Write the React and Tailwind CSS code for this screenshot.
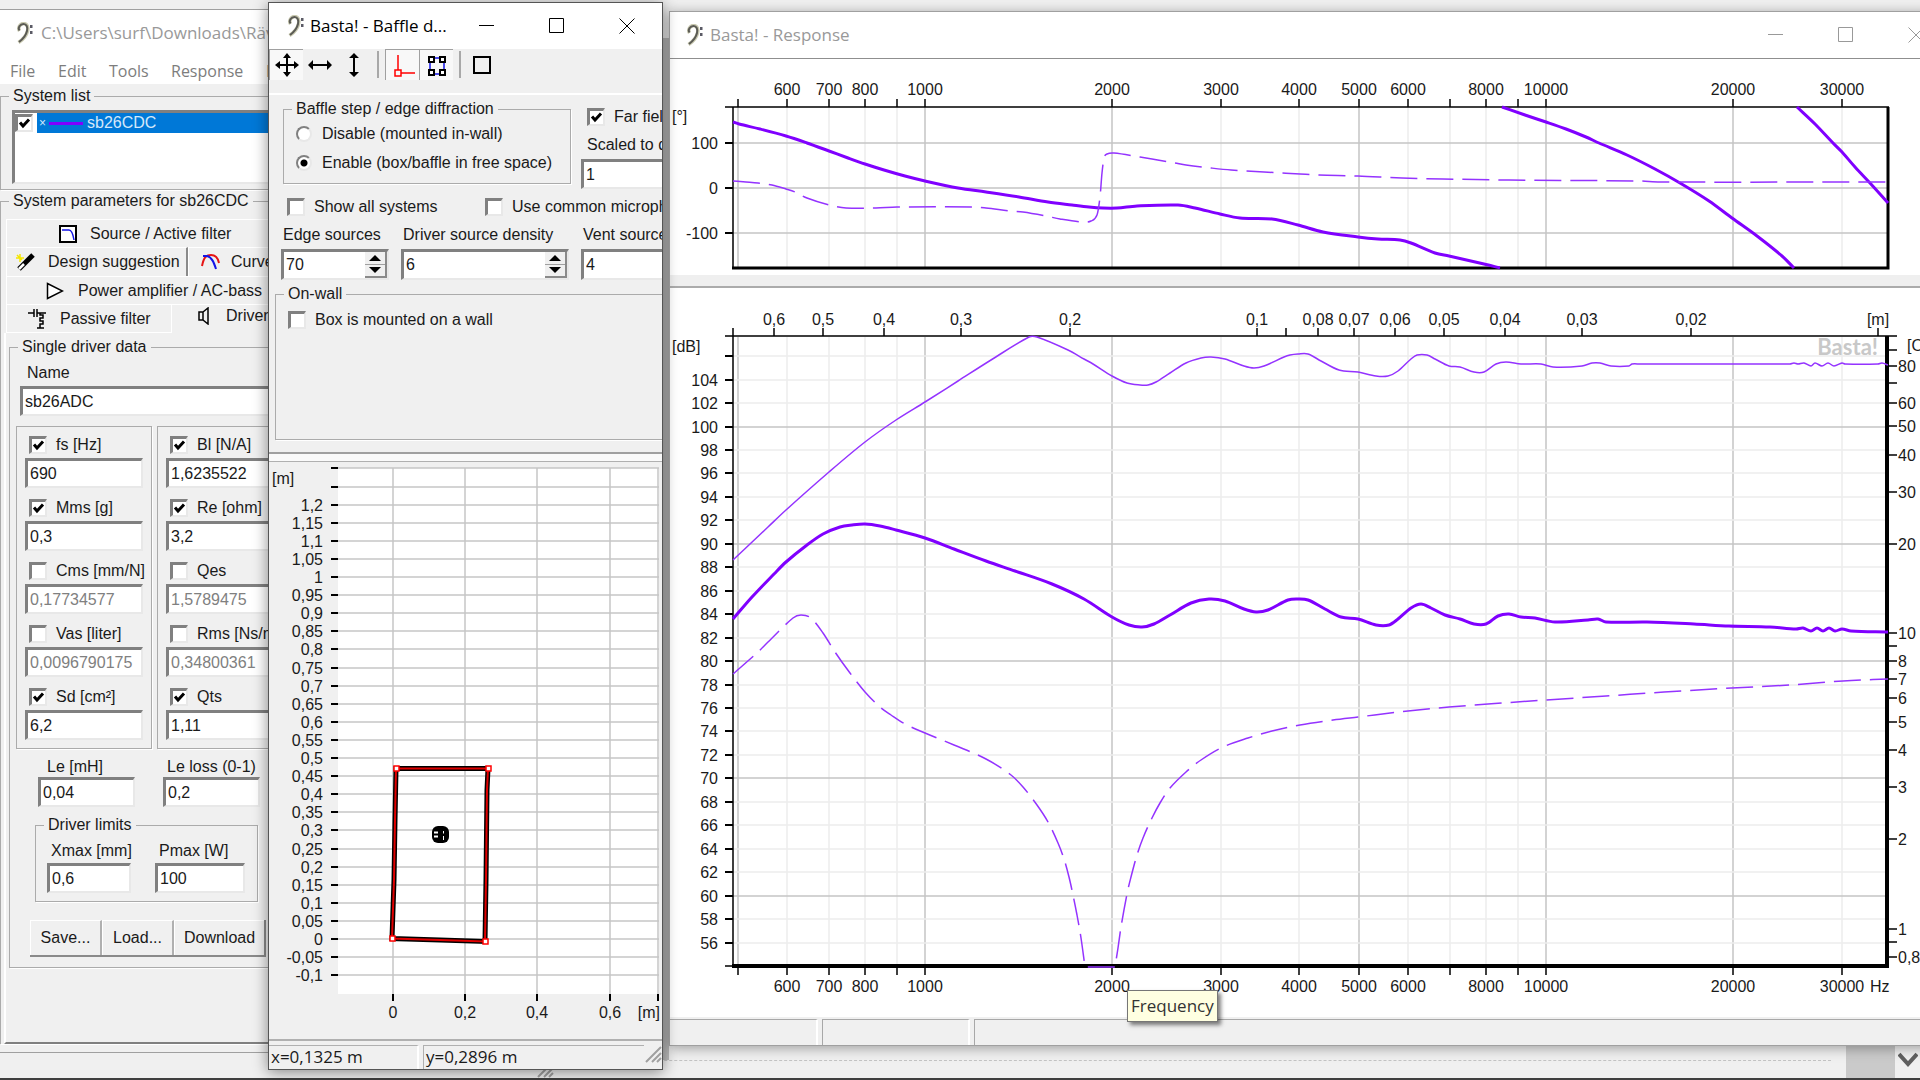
import { useId } from "react";
import { clsx } from "clsx";

const SUNKEN = "border-t-3 border-l-3 border-r-2 border-b-2 border-t-[#808080] border-l-[#808080] border-r-[#e8e8e8] border-b-[#e8e8e8] bg-white";

/* ---------- shared controls ---------- */

function ClefIcon() {
  return (
    <svg width="18" height="22" viewBox="0 0 18 22" fill="none" className="shrink-0">
      <path d="M3.5 9C1.5 6 4 1.5 7.500 1.500C11 1.500 12.500 5 11.500 9C10.500 13.500 7 17.500 2.500 20.500" stroke="#c9c9b0" strokeWidth="3.500" />
      <path d="M3.500 8.500C1.500 6 4 2 7.500 2C10.500 2 12 5 11 9C10 13.500 7 17 3 20" stroke="#5b5b55" strokeWidth="2" />
      <path d="M14 3h2.500v3h-2.500zM14 9h2.500v3h-2.500z" fill="#5b5b66" />
    </svg>
  );
}

function WindowControls() {
  return (
    <div className="ml-auto flex h-full">
      <button aria-label="Minimize" className="flex w-[70px] items-center justify-center">
        <svg width="16" height="16" stroke="currentColor"><path d="M0 7.500h15" /></svg>
      </button>
      <button aria-label="Maximize" className="flex w-[70px] items-center justify-center">
        <svg width="16" height="16" stroke="currentColor" fill="none"><path d="M.5 .5h14v14h-14z" /></svg>
      </button>
      <button aria-label="Close" className="flex w-[70px] items-center justify-center">
        <svg width="16" height="16" stroke="currentColor"><path d="M.5 .5l15 15M15.500 .5l-15 15" /></svg>
      </button>
    </div>
  );
}

function Tick({ checked, label }) {
  return (
    <span className="relative flex size-[18px] shrink-0">
      <input type="checkbox" aria-label={label} defaultChecked={checked} className={clsx("peer size-[18px] appearance-none", SUNKEN)} />
      <svg viewBox="0 0 18 18" className="pointer-events-none absolute inset-0 hidden peer-checked:block">
        <path d="M5 8.500l3 3.500l6-6.500" fill="none" stroke="#000" strokeWidth="3" />
      </svg>
    </span>
  );
}

function CheckRow({ label, checked, className }) {
  return (
    <label className={clsx("flex h-5 shrink-0 items-center gap-[9px] whitespace-nowrap", className)}>
      <Tick checked={checked} />
      {label}
    </label>
  );
}

function RadioRow({ label, checked }) {
  return (
    <label className="flex h-[29px] items-center gap-[10px] pl-3 whitespace-nowrap">
      <input
        type="radio"
        name="diffraction"
        defaultChecked={checked}
        className="size-4 appearance-none rounded-full border-2 border-t-[#808080] border-l-[#808080] border-r-[#e8e8e8] border-b-[#e8e8e8] bg-white checked:bg-[radial-gradient(circle,#000_3px,#fff_4px)]"
      />
      {label}
    </label>
  );
}

function Group({ title, className, children }) {
  return (
    <fieldset className={clsx("border border-[#ababab] shadow-[1px_1px_0_#fff]", className)}>
      <legend className="ml-2 h-5 px-1 leading-5 whitespace-nowrap">{title}</legend>
      {children}
    </fieldset>
  );
}

function Field({ label, value, className, labelClass = "pl-1" }) {
  const id = useId();
  return (
    <div className={className}>
      <label htmlFor={id} className={clsx("block h-5 leading-5 whitespace-nowrap", labelClass)}>{label}</label>
      <input id={id} defaultValue={value} className={clsx("block h-[30px] w-full pl-0.5", SUNKEN)} />
    </div>
  );
}

function SpinField({ label, value, className }) {
  const id = useId();
  return (
    <div className={clsx("shrink-0", className)}>
      <label htmlFor={id} className="block h-5 pl-0.5 leading-5 whitespace-nowrap">{label}</label>
      <div className={clsx("mt-1 flex h-[31px]", SUNKEN)}>
        <input id={id} defaultValue={value} className="min-w-0 flex-1 pl-0.5" />
        <div className="flex w-[22px] flex-col border-r-2 border-b-2 border-[#8a8a8a] bg-[#f0f0f0]">
          <button aria-label={`${label} up`} className="flex flex-1 items-center justify-center border-b border-[#a0a0a0]">
            <svg width="12" height="6"><path d="M6 0l6 6h-12z" /></svg>
          </button>
          <button aria-label={`${label} down`} className="flex flex-1 items-center justify-center">
            <svg width="12" height="6"><path d="M6 6l6-6h-12z" /></svg>
          </button>
        </div>
      </div>
    </div>
  );
}

/* ---------- main window ---------- */

const LEFT_PARAMS = [
  ["fs [Hz]", "690", true],
  ["Mms [g]", "0,3", true],
  ["Cms [mm/N]", "0,17734577", false],
  ["Vas [liter]", "0,0096790175", false],
  ["Sd [cm²]", "6,2", true],
];

const RIGHT_PARAMS = [
  ["Bl [N/A]", "1,6235522", true],
  ["Re [ohm]", "3,2", true],
  ["Qes", "1,5789475", false],
  ["Rms [Ns/m]", "0,34800361", false],
  ["Qts", "1,11", true],
];

function ParamBox({ rows }) {
  return (
    <div className="flex w-[136px] flex-col gap-2.5 border border-[#ababab] pt-2 pb-2 shadow-[1px_1px_0_#fff]">
      {rows.map(([label, value, on]) => (
        <div key={label} className="flex flex-col gap-[3px]">
          <CheckRow label={label} checked={on} className="pl-3" />
          <input
            aria-label={label}
            defaultValue={value}
            className={clsx("mx-2 h-[30px] pl-0.5", SUNKEN, !on && "text-[#808080]")}
          />
        </div>
      ))}
    </div>
  );
}

function Tab({ className, icon, children }) {
  return (
    <button role="tab" className={clsx("flex h-full items-center border-t border-l border-white whitespace-nowrap", className)}>
      {icon}
      {children}
    </button>
  );
}

const filterIcon = (
  <svg width="18" height="18" fill="none">
    <path d="M1 1h16v16h-16z" fill="#fff" stroke="#000" strokeWidth="2" />
    <path d="M3 5h7c3 0 4 4 5 10" stroke="#1414e6" strokeWidth="1.500" />
  </svg>
);

const wandIcon = (
  <svg width="20" height="20" fill="none">
    <path d="M3 17L17 3" stroke="#000" strokeWidth="5" />
    <path d="M3 17l5-5" stroke="#fff" strokeWidth="2.500" />
    <path d="M4 2v8M0 6h8M1 3l5 5" stroke="#f5e600" strokeWidth="1.500" />
  </svg>
);

const curveIcon = (
  <svg width="20" height="18" fill="none" strokeWidth="2">
    <path d="M1 13C3 3 6 2 10 2s7 3 8 8" stroke="#e61414" />
    <path d="M2 3h4c5 1 7 7 9 13" stroke="#1414e6" />
  </svg>
);

const ampIcon = (
  <svg width="18" height="18" fill="none"><path d="M1.500 1.500v15l15-7.500z" fill="#fff" stroke="#000" strokeWidth="1.500" /></svg>
);

const passiveIcon = (
  <svg width="20" height="20" fill="none" stroke="#000" strokeWidth="1.500">
    <path d="M0 4h6M6 0v8M9 0v8M9 4h9M12 4v2h3v3h-3v3h3v3h-3v4M9 19h7" />
  </svg>
);

const speakerIcon = (
  <svg width="12" height="18" fill="none" stroke="#000" strokeWidth="1.500"><path d="M1 5h4v8h-4zM5 5l5-4v16l-5-4" /></svg>
);

function MainWindow() {
  return (
    <section className="absolute top-[9px] bottom-[2px] left-0 flex w-[554px] flex-col border-t border-[#a0a0a0] bg-[#f0f0f0]">
      <header className="flex h-[45px] shrink-0 items-center gap-[7px] bg-white pl-4 font-['Open_Sans',sans-serif] text-[17px] text-[#999]">
        <ClefIcon />
        <span className="whitespace-nowrap">C:\Users\surf\Downloads\Räv</span>
      </header>
      <nav className="flex h-[29px] shrink-0 items-center bg-white pt-0.5 pl-2.5 font-['Open_Sans',sans-serif] text-[#7d7d7d]">
        <button className="w-12 text-left">File</button>
        <button className="w-[51px] text-left">Edit</button>
        <button className="w-[62px] text-left">Tools</button>
        <button className="w-[95px] text-left">Response</button>
        <button className="text-left">Baffle</button>
      </nav>

      <Group title="System list" className="mt-0.5 h-[104px] shrink-0">
        <div className={clsx("mt-1 ml-[11px] h-[74px]", SUNKEN)}>
          <div className="flex h-5 items-center gap-1">
            <Tick checked label="sb26CDC" />
            <div className="flex h-5 flex-1 items-center bg-[#0078d7] pl-0.5 text-[#d4e8fa]">
              <span className="w-2.5 text-xs">×</span>
              <span className="h-[3px] w-[34px] bg-[#8000ff]" />
              <span className="ml-1">sb26CDC</span>
            </div>
          </div>
        </div>
      </Group>

      <Group title="System parameters for sb26CDC" className="mt-px flex min-h-0 flex-1 flex-col border-b-0">
        <div role="tablist" className="mt-2 shrink-0 pl-[5px]">
          <div className="h-7">
            <Tab className="w-full gap-[13px] pl-[52px]" icon={filterIcon}>Source / Active filter</Tab>
          </div>
          <div className="flex h-[29px]">
            <Tab className="w-[182px] gap-3 border-r-2 border-r-[#8a8a8a] pl-[9px]" icon={wandIcon}>Design suggestion</Tab>
            <Tab className="flex-1 gap-2.5 pl-3" icon={curveIcon}>Curves</Tab>
          </div>
          <div className="h-7">
            <Tab className="w-full gap-3.5 pl-[39px]" icon={ampIcon}>Power amplifier / AC-bass</Tab>
          </div>
          <div className="flex h-[29px]">
            <Tab className="w-[165px] gap-3 border-b pl-[21px]" icon={passiveIcon}>Passive filter</Tab>
            <Tab className="flex-1 gap-4 pb-1.5 pl-[26px]" icon={speakerIcon}>Driver</Tab>
          </div>
        </div>

        <div className="ml-[3px] min-h-0 flex-1 border-b-2 border-l-2 border-b-[#808080] border-l-white">
          <Group title="Single driver data" className="mt-1 ml-[3px] pb-2.5">
            <Field label="Name" value="sb26ADC" className="mt-1.5 pl-[10px]" labelClass="mb-[3px] pl-[7px]" />
            <div className="mt-2.5 ml-1.5 flex gap-[5px]">
              <ParamBox rows={LEFT_PARAMS} />
              <ParamBox rows={RIGHT_PARAMS} />
            </div>
            <div className="mt-2 flex gap-7 pl-7">
              <Field label="Le [mH]" value="0,04" className="w-[97px]" labelClass="pl-[9px]" />
              <Field label="Le loss (0-1)" value="0,2" className="w-[97px]" />
            </div>
            <Group title="Driver limits" className="mt-2 ml-[25px] w-[223px] pb-2">
              <div className="mt-1.5 flex gap-6 pl-[11px]">
                <Field label="Xmax [mm]" value="0,6" className="w-[84px]" labelClass="mb-0.5 pl-1" />
                <Field label="Pmax [W]" value="100" className="w-[90px]" labelClass="mb-0.5 pl-1" />
              </div>
            </Group>
            <div className="mt-[18px] ml-5 flex h-[37px] w-[236px] border-r-2 border-b-2 border-[#8a8a8a]">
              <button className="w-[72px] border-t border-r-2 border-l border-t-white border-r-[#b0b0b0] border-l-white">Save...</button>
              <button className="w-[72px] border-t border-r-2 border-l border-t-white border-r-[#b0b0b0] border-l-white">Load...</button>
              <button className="flex-1 border-t border-l border-white">Download</button>
            </div>
          </Group>
        </div>
      </Group>

      <footer className="flex h-[34px] shrink-0 items-end justify-end pt-2">
        <div className="flex h-full w-full items-end justify-end border-t border-[#a0a0a0]"><SizeGrip /></div>
      </footer>
    </section>
  );
}

function SizeGrip() {
  return (
    <svg width="18" height="18" stroke="#a0a0a0" strokeWidth="2"><path d="M2 17L17 2M8 17l9-9M13 17l4-4" /></svg>
  );
}

/* ---------- baffle window ---------- */

const metres = (v) => String(Math.round(v * 100) / 100).replace(".", ",");

function BafflePlot() {
  const rows = Array.from({ length: 29 }, (_, i) => -0.1 + i * 0.05);
  const y = (v) => Math.round(939 - v * 362);
  const outline = "M396 768.500H488L487 790L486 880L485 941.500L440 940L392 938.500L394 880L395 820Z";
  return (
    <svg viewBox="269 462 393 577" className="block w-full" fontSize="16" fill="#1a1a1a">
      <path d="M338 468H659V994H338z" fill="#fff" />
      <text x="272" y="484">[m]</text>
      {rows.map((v) => (
        <g key={v}>
          <path d={`M338 ${y(v)}H659`} stroke="#c6c6c6" strokeWidth="1.500" />
          <path d={`M331 ${y(v)}H338`} stroke="#000" strokeWidth="2" />
          {v < 1.22 && <text x="323" y={y(v) + 6} textAnchor="end">{metres(v)}</text>}
        </g>
      ))}
      {[[393, "0"], [465, "0,2"], [537, "0,4"], [610, "0,6"], [658, ""]].map(([x, t]) => (
        <g key={x}>
          <path d={`M${x} 468V994`} stroke="#c6c6c6" strokeWidth="1.500" />
          <path d={`M${x} 994V1001`} stroke="#000" strokeWidth="2" />
          <text x={x} y="1018" textAnchor="middle">{t}</text>
        </g>
      ))}
      <text x="660" y="1018" textAnchor="end">[m]</text>
      <path d={outline} fill="none" stroke="#000" strokeWidth="5" />
      <path d={outline} fill="none" stroke="#e00000" strokeWidth="2" />
      {[[396, 768], [488, 768], [485, 941], [392, 938]].map(([cx, cy]) => (
        <rect key={cx} x={cx - 2} y={cy - 2} width="5" height="5" fill="#fff" stroke="#f00" strokeWidth="1.500" />
      ))}
      <rect x="432" y="826" width="17" height="17" rx="6" fill="#000" />
      <path d="M434 831.500h4v2h-4zM434 835.500h4v2h-4z" fill="#fff" />
      <path d="M443.500 831v2.500M443.500 836v4" stroke="#fff" />
    </svg>
  );
}

function ToolButton({ label, pressed, children }) {
  return (
    <button
      aria-label={label}
      className={clsx("flex h-[31px] w-[34px] items-center justify-center", pressed && "border-t border-l border-[#a0a0a0] bg-[#f8f8f8]")}
    >
      <svg width="26" height="26" fill="none" stroke="#000" strokeWidth="2">{children}</svg>
    </button>
  );
}

function BaffleWindow() {
  return (
    <section className="absolute top-[2px] bottom-[10px] left-[268px] flex w-[395px] flex-col border border-[#555] bg-[#f0f0f0] shadow-[0_2px_14px_rgba(0,0,0,0.45)]">
      <header className="flex h-[46px] shrink-0 items-center bg-white pl-[18px] font-['Open_Sans',sans-serif] text-black">
        <ClefIcon />
        <h1 className="ml-[5px] text-[17px] whitespace-nowrap">Basta! - Baffle d...</h1>
        <WindowControls />
      </header>
      <div role="toolbar" className="flex h-11 shrink-0">
        <ToolButton label="Move" pressed>
          <path d="M13 3v20M3 13h20" />
          <path d="M13 1l4 5h-8zM13 25l4-5h-8zM1 13l5-4v8zM25 13l-5-4v8z" fill="#000" stroke="none" />
        </ToolButton>
        <ToolButton label="Move horizontally">
          <path d="M3 13h20" />
          <path d="M1 13l5-5v10zM25 13l-5-5v10z" fill="#000" stroke="none" />
        </ToolButton>
        <ToolButton label="Move vertically">
          <path d="M13 3v20" />
          <path d="M13 1l5 5h-10zM13 25l5-5h-10z" fill="#000" stroke="none" />
        </ToolButton>
        <span className="mx-1.5 mt-0.5 h-[27px] w-0.5 bg-[#a8a8a8]" />
        <ToolButton label="Edges" pressed>
          <path d="M8 3v15M11 21h14M5 18h6v6h-6z" stroke="#f00" strokeWidth="1.500" />
        </ToolButton>
        <ToolButton label="Corners" pressed>
          <path d="M6 7v14M20 7v14M7 6h12M7 22h12" stroke="#1414e6" strokeWidth="1.500" />
          <path d="M5 5h5v5h-5zM16 5h5v5h-5zM5 18h5v5h-5zM16 18h5v5h-5z" fill="#fff" />
        </ToolButton>
        <span className="mx-1.5 mt-0.5 h-[27px] w-0.5 bg-[#a8a8a8]" />
        <ToolButton label="Box">
          <path d="M3 5h16v16h-16z" />
        </ToolButton>
      </div>

      <form className="shrink-0 overflow-hidden border-t-2 border-white pb-3">
        <div className="pl-3">
          <div className="flex pt-1">
            <Group title="Baffle step / edge diffraction" className="ml-0.5 h-[85px] w-[288px] shrink-0">
              <RadioRow label="Disable (mounted in-wall)" />
              <RadioRow label="Enable (box/baffle in free space)" checked />
            </Group>
            <div className="ml-2.5 w-[120px] shrink-0 pt-2">
              <CheckRow label="Far field" checked className="mb-2 pl-1.5" />
              <Field label="Scaled to d" value="1" labelClass="mb-1 pl-1.5" />
            </div>
          </div>
          <div className="mt-2 flex pl-1.5">
            <CheckRow label="Show all systems" className="w-[198px]" />
            <CheckRow label="Use common microphone" />
          </div>
          <div className="mt-2 flex">
            <SpinField label="Edge sources" value="70" className="mr-3 w-[108px]" />
            <SpinField label="Driver source density" value="6" className="mr-3 w-[168px]" />
            <SpinField label="Vent sources" value="4" className="w-[120px]" />
          </div>
        </div>
        <Group title="On-wall" className="mt-1 ml-1.5 h-[156px] w-[420px]">
          <CheckRow label="Box is mounted on a wall" className="mt-1.5 pl-3" />
        </Group>
      </form>
      <div className="h-2.5 shrink-0 border-t-2 border-b border-t-[#a0a0a0] border-b-[#b0b0b0] bg-[#fafafa]" />

      <div className="min-h-0 flex-1">
        <BafflePlot />
      </div>

      <footer className="flex h-[30px] shrink-0 border-t-2 border-[#b0b0b0] pt-1 font-['Open_Sans',sans-serif] leading-[22px]">
        <span className="mr-1 w-[150px] border-t border-r-2 border-t-[#b0b0b0] border-r-white pl-0.5 text-[17px]">x=0,1325 m</span>
        <span className="flex-1 border-t border-l border-[#b0b0b0] pl-0.5 text-[17px]">y=0,2896 m</span>
        <SizeGrip />
      </footer>
    </section>
  );
}

/* ---------- response window ---------- */

const FREQS = [500, 600, 700, 800, 900, 1000, 2000, 3000, 4000, 5000, 6000, 7000, 8000, 9000, 10000, 20000, 30000];
const UNLABELLED = [500, 900, 7000, 9000];
const MAJOR = [500, 1000, 2000, 5000, 10000, 20000];
const WAVELENGTHS = [0.6, 0.5, 0.4, 0.3, 0.2, 0.1, 0.09, 0.08, 0.07, 0.06, 0.05, 0.04, 0.03, 0.02, 0.01];
const OHMS = [90, 80, 70, 60, 50, 40, 30, 20, 10, 9, 8, 7, 6, 5, 4, 3, 2, 1, 0.9, 0.8];
const OHM_UNLABELLED = [90, 70, 9, 0.9];

const fx = (f) => Math.round(925 + 621 * Math.log10(f / 1000));
const dbY = (db) => Math.round(426.5 + (100 - db) * 11.73);
const ohmY = (z) => Math.round(928.5 - 295.8 * Math.log10(z));

// smooth curve through the samples, x always increasing
function spline(points) {
  const p = points.split(" ").map((s) => s.split(",").map(Number));
  const slope = (i) => {
    const a = p[i - 1] ?? p[i];
    const b = p[i + 1] ?? p[i];
    return (b[1] - a[1]) / (b[0] - a[0]);
  };
  let d = `M${p[0]}`;
  for (let i = 0; i < p.length - 1; i++) {
    const [x0, y0] = p[i];
    const [x1, y1] = p[i + 1];
    const h = (x1 - x0) / 3;
    d += `C${x0 + h},${y0 + slope(i) * h} ${x1 - h},${y1 - slope(i + 1) * h} ${x1},${y1}`;
  }
  return d;
}

const PHASE = [
  "733,122 739,124 760,129 786,136 807,143 829,151 848,158 865,164 884,170 905,176 925,181 958,188 986,192 1019,197 1048,202 1072,205 1089,207 1103,208 1117,208 1137,206 1178,205 1195,208 1220,214 1240,218 1272,219 1298,225 1323,232 1358,237 1378,239 1400,240 1411,243 1435,253 1449,256 1484,264 1500,268",
  "1502,107 1525,115 1546,122 1566,129 1586,137 1599,143 1627,155 1655,169 1680,183 1709,201 1732,218 1757,236 1782,256 1794,268",
  "1797,107 1815,124 1833,143 1842,152 1855,167 1870,183 1888,203",
];
const IMPEDANCE_PHASE =
  "733,181 746,182 758,183 772,185 786,189 795,192 807,198 829,205 846,208 876,208 897,207 974,207 986,208 1011,211 1023,212 1046,216 1060,219 1082,222 1091,221 1097,215 1100,197 1102,173 1104,158 1107,154 1114,153 1140,157 1152,159 1175,163 1186,165 1211,168 1231,170 1264,172 1300,174 1319,175 1358,176 1402,178 1443,179 1509,180 1639,181 1660,182 1888,182";
const MAX_SPL =
  "733,560 768,527 786,510 829,472 865,442 896,420 925,402 958,381 991,360 1029,337 1037,337 1068,350 1084,359 1093,364 1112,376 1127,383 1140,385 1148,385 1156,382 1170,373 1186,363 1201,358 1211,357 1225,359 1244,366 1254,368 1264,366 1284,357 1290,355 1298,354 1308,354 1321,361 1339,370 1358,372 1376,376 1388,376 1398,371 1411,359 1417,355 1427,355 1435,359 1449,366 1460,367 1474,372 1484,372 1496,364 1506,362 1521,364 1541,364 1553,367 1582,366 1592,363 1600,363 1611,366 1629,366 1632,364 1640,364 1780,364 1790,364 1794,363 1798,364 1804,363 1811,366 1815,363 1822,366 1828,363 1834,366 1842,363 1845,364 1878,364 1882,363 1888,365";
const SPL =
  "733,619 752,597 774,574 786,562 807,545 823,534 840,527 852,525 865,524 880,526 896,530 925,538 954,549 986,561 1015,571 1052,584 1084,599 1112,617 1129,625 1142,627 1154,624 1170,615 1191,603 1209,599 1225,601 1244,609 1256,612 1268,610 1288,600 1298,599 1308,600 1325,609 1341,617 1358,619 1376,625 1389,625 1398,619 1411,608 1421,604 1431,608 1445,615 1460,619 1474,624 1486,624 1498,616 1509,614 1521,617 1535,618 1555,622 1588,620 1598,619 1606,622 1647,622 1694,624 1729,626 1770,627 1796,629 1803,628 1811,631 1817,628 1823,631 1829,628 1835,631 1842,629 1851,631 1888,632";
const IMPEDANCE =
  "733,674 758,652 768,642 793,618 801,615 811,618 823,633 835,652 850,673 865,692 880,707 891,715 905,724 925,733 954,745 986,759 1011,775 1023,787 1037,805 1048,822 1058,843 1064,859 1069,877 1073,895 1077,915 1081,938 1085,967 1085,967 1115,967 1115,967 1118,948 1121,927 1127,894 1131,877 1137,855 1143,838 1152,818 1160,803 1170,788 1186,772 1201,760 1223,747 1248,738 1272,731 1300,725 1333,720 1358,717 1408,711 1449,707 1502,703 1545,700 1606,696 1664,692 1732,688 1790,685 1843,681 1888,679";

function VerticalGrid({ top, bottom }) {
  return FREQS.map((f) => (
    <path key={f} d={`M${fx(f)} ${top}V${bottom}`} stroke={MAJOR.includes(f) ? "#c4c4c4" : "#ededed"} strokeWidth="1.500" />
  ));
}

function FrequencyAxis({ from, to, textY }) {
  return FREQS.map((f) => (
    <g key={f}>
      <path d={`M${fx(f)} ${from}V${to}`} stroke="#000" strokeWidth="1.500" />
      {!UNLABELLED.includes(f) && <text x={fx(f)} y={textY} textAnchor="middle">{f}</text>}
    </g>
  ));
}

function PhaseChart() {
  return (
    <svg viewBox="670 59 1281 216" className="block w-full shrink-0" fontSize="16" fill="#1a1a1a">
      <VerticalGrid top={107} bottom={268} />
      <FrequencyAxis from={99} to={107} textY={95} />
      <text x="672" y="122">[°]</text>
      {[[100, 143], [0, 188], [-100, 233]].map(([v, y]) => (
        <g key={v}>
          <path d={`M733 ${y}H1888`} stroke="#c4c4c4" strokeWidth="1.500" />
          <path d={`M725 ${y}H733`} stroke="#000" strokeWidth="2" />
          <text x="718" y={y + 6} textAnchor="end">{v}</text>
        </g>
      ))}
      <path d="M725 107H1889M733 107V268" fill="none" stroke="#000" strokeWidth="1.500" />
      <path d="M732 268H1888V107" fill="none" stroke="#000" strokeWidth="3" />
      <g fill="none" stroke="#8000ff">
        {PHASE.map((p) => <path key={p} d={spline(p)} strokeWidth="3" />)}
        <path d={spline(IMPEDANCE_PHASE)} strokeWidth="1.500" strokeDasharray="27 9" stroke="#9433ff" />
      </g>
    </svg>
  );
}

function SplChart() {
  const dbs = Array.from({ length: 26 }, (_, i) => 106 - i * 2);
  return (
    <svg viewBox="670 288 1281 729" className="block w-full shrink-0" fontSize="16" fill="#1a1a1a">
      <VerticalGrid top={337} bottom={966} />
      {dbs.map((db) => (
        <g key={db}>
          <path d={`M733 ${dbY(db)}H1886`} stroke={db % 10 === 0 ? "#c4c4c4" : "#ededed"} strokeWidth="1.500" />
          <path d={`M725 ${dbY(db)}H733`} stroke="#000" strokeWidth="2" />
          {db < 106 && <text x="718" y={dbY(db) + 6} textAnchor="end">{db}</text>}
        </g>
      ))}
      <text x="1878" y="355" textAnchor="end" fontFamily="Lato" fontWeight="700" fontSize="22" fill="#c8c8c8">Basta!</text>
      {WAVELENGTHS.map((w) => (
        <g key={w}>
          <path d={`M${fx(343 / w)} 328V336`} stroke="#000" strokeWidth="1.500" />
          {w !== 0.09 && <text x={fx(343 / w)} y="325" textAnchor="middle">{w === 0.01 ? "[m]" : metres(w)}</text>}
        </g>
      ))}
      {OHMS.map((z) => (
        <g key={z}>
          <path d={`M1889 ${ohmY(z)}H1897`} stroke="#000" strokeWidth="1.500" />
          {!OHM_UNLABELLED.includes(z) && <text x="1898" y={ohmY(z) + 6}>{String(z).replace(".", ",")}</text>}
        </g>
      ))}
      <text x="672" y="352">[dB]</text>
      <text x="1907" y="351">[Ohm]</text>
      <FrequencyAxis from={966} to={975} textY={992} />
      <text x="1870" y="992">Hz</text>
      <path d="M725 336H1897M733 328V966M725 966H733" fill="none" stroke="#000" strokeWidth="1.500" />
      <path d="M732 966H1887V336" fill="none" stroke="#000" strokeWidth="4" />
      <g fill="none" stroke="#9433ff" strokeWidth="1.500">
        <path d={spline(MAX_SPL)} />
        <path d={spline(IMPEDANCE)} strokeDasharray="27 9" />
        <path d={spline(SPL)} stroke="#8000ff" strokeWidth="3" />
      </g>
    </svg>
  );
}

function ResponseWindow() {
  return (
    <section className="absolute top-[11px] right-[-32px] bottom-[34px] left-[669px] flex flex-col border border-[#a0a0a0] bg-white shadow-[0_2px_12px_rgba(0,0,0,0.35)]">
      <header className="flex h-[47px] shrink-0 items-center border-b border-[#8f8f8f] pl-4 font-['Open_Sans',sans-serif] text-[#999]">
        <ClefIcon />
        <h2 className="ml-1.5 text-[17px] whitespace-nowrap">Basta! - Response</h2>
        <WindowControls />
      </header>
      <PhaseChart />
      <div className="h-[13px] shrink-0 border-b-2 border-[#ababab] bg-[#efefef]" />
      <SplChart />
      <footer className="flex min-h-0 flex-1 gap-1 bg-[#f0f0f0] pt-0.5">
        <span className="w-[148px] border-t border-r-2 border-t-[#a8a8a8] border-r-white" />
        <span className="w-[148px] border-t border-r-2 border-l border-t-[#a8a8a8] border-r-white border-l-[#a8a8a8]" />
        <span className="flex-1 border-t border-l border-[#a8a8a8]" />
      </footer>
    </section>
  );
}

export default function App() {
  return (
    <div className="relative h-screen overflow-hidden bg-[#3f3f3f] font-['Liberation_Sans',Arial,sans-serif] text-base leading-5 text-[#1a1a1a]">
      {/* window behind everything */}
      <div className="flex h-[calc(100vh-2px)] items-end bg-[#f0f0f0]">
        <div className="mb-[17px] flex-1 border-t border-dashed border-[#c4c4c4]" />
        <div className="ml-[15px] h-12 w-[49px] bg-[#cacaca]" />
        <div className="flex h-9 w-[25px] items-center justify-center">
          <svg width="20" height="16" fill="none" stroke="#606060" strokeWidth="4"><path d="M1 2l9 10l9-10" /></svg>
        </div>
      </div>

      <MainWindow />
      <div className="absolute top-[38px] bottom-[20px] left-[663px] w-1.5 bg-[#bdbdbd]" />
      <ResponseWindow />
      <BaffleWindow />

      <div role="tooltip" className="absolute top-[990px] left-[1127px] border border-[#767676] bg-[#ffffe1] px-[3px] py-1 font-['Open_Sans',sans-serif] text-[17px] leading-[22px] text-[#333] shadow-[3px_3px_4px_rgba(0,0,0,0.5)]">
        Frequency
      </div>
    </div>
  );
}
